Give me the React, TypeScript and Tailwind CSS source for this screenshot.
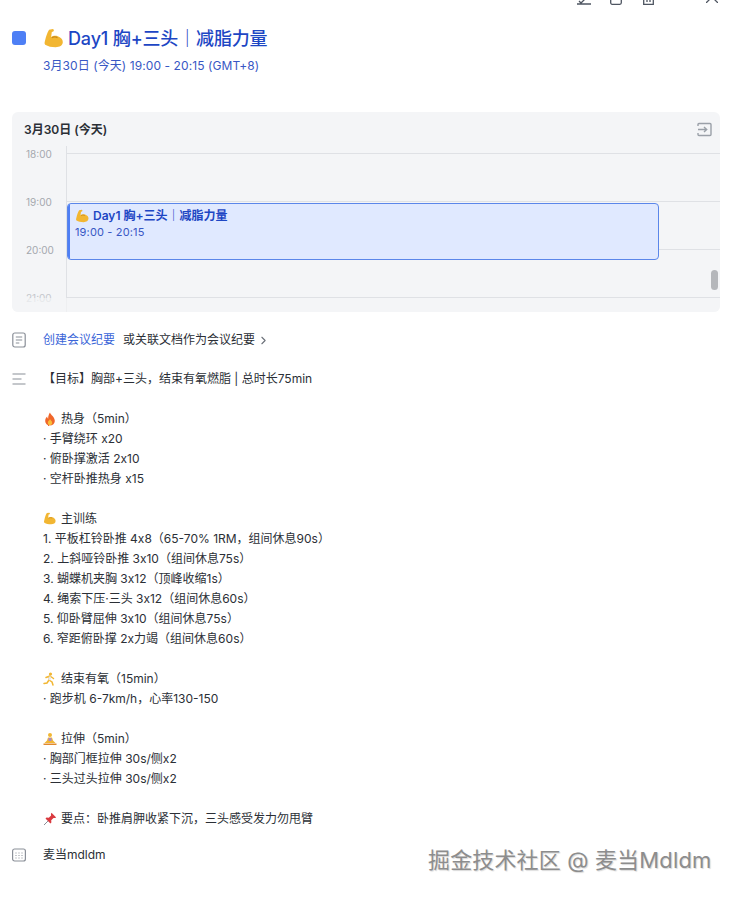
import React from 'react';
import { ChevronRight } from 'lucide-react';

const FONT = "font-['Inter','Noto_Sans_CJK_SC',sans-serif]";

function Muscle({ size }: { size: number }) {
  return (
    <svg width={size} height={size} viewBox="0 0 20 20" className="inline-block shrink-0">
      <path d="M5.500 1.500 9 1c1 .2 1.200 1.600.4 2.200l-1.400.5-.6 4.600c1.400-1.300 3.800-1.700 6-.9 2.700 1 4.600 2.500 4.600 5.400 0 3.200-3 4.700-6.500 4.700-3.700 0-7-.8-9.500-2.300C1 14.500 1.500 12.800 2 11c.7-3 1.700-6.700 3.500-9.500z" fill="#f2b632" />
      <path d="M8 8.800c1.700-.9 3.600-.9 5.200 0" fill="none" stroke="#c98a1b" strokeWidth="1" />
    </svg>
  );
}

function Fire() {
  return (
    <svg width="14" height="14" viewBox="0 0 14 14" className="inline-block shrink-0">
      <path d="M7 .5c.6 2.600 4.800 4.300 4.800 8.300 0 2.900-2.200 4.700-4.800 4.700s-4.800-1.800-4.800-4.700c0-2 1-3.300 2-4.200 0 1 .3 1.800 1 2.200C5 4.600 5.800 2 7 .5z" fill="#f0662a" />
      <path d="M7 7c.3 1.200 2.200 2 2.200 3.700 0 1.500-1 2.500-2.200 2.500s-2.200-1-2.200-2.500C4.800 9 6.400 8.400 7 7z" fill="#f8bd38" />
    </svg>
  );
}

function Runner() {
  return (
    <svg width="14" height="14" viewBox="0 0 14 14" className="inline-block shrink-0">
      <circle cx="7.500" cy="2" r="1.600" fill="#f2b632" />
      <path d="M7 4 3 5.500M7 4l3.500 2.500M7 4 6 8l3 2 1 3M6 8l-2 3-3 .5" fill="none" stroke="#f2b632" strokeWidth="1.500" strokeLinecap="round" />
      <path d="M5.800 4.500h2.400L7.400 8.200H5.600z" fill="#e5e7eb" />
    </svg>
  );
}

function Yoga() {
  return (
    <svg width="14" height="14" viewBox="0 0 14 14" className="inline-block shrink-0">
      <circle cx="7" cy="3" r="2" fill="#f2b632" />
      <path d="M5 5.500h4l1 3 2.500 2.500H1.500L4 8.500z" fill="#f2b632" />
      <path d="M.5 11.500h13V13H.5z" fill="#e08a2e" />
      <path d="M5.500 6h3v3h-3z" fill="#a78bc9" />
    </svg>
  );
}

function Pin() {
  return (
    <svg width="14" height="14" viewBox="0 0 14 14" className="inline-block shrink-0">
      <path d="M1 13 6 8" stroke="#8a8f98" strokeWidth="1" />
      <path d="M8.500.8 13.200 5.500l-1.200.6-1.500-.2-2.300 2.300.2 2.300-1 1L2.500 6.600l1-1 2.300.2 2.300-2.300-.2-1.500z" fill="#d93a3f" />
    </svg>
  );
}

function Line({ text, icon }: { text?: string; icon?: React.ReactNode }) {
  return (
    <div className="flex items-center h-5 whitespace-pre">
      {icon && <span className="mr-[4px] flex w-[14px]">{icon}</span>}
      {text}
    </div>
  );
}

export default function App() {
  return (
    <div className={`relative w-[736px] h-[897px] overflow-hidden bg-white text-[12px] text-[#2b2f36] ${FONT}`}>
      {/* window buttons cut off by the top edge */}
      <div className="absolute top-[-9px] left-[577px] flex items-start text-[#4e5561]">
        <svg width="14" height="14" viewBox="0 0 14 14" fill="none" stroke="currentColor" strokeWidth="1.300"><path d="M0 13h14M2 10l2 2 4-4" /></svg>
        <svg width="12" height="14" viewBox="0 0 12 14" fill="none" stroke="currentColor" strokeWidth="1.300" className="ml-[19px]"><rect x=".7" y="1" width="10.600" height="12.300" rx="1.500" /></svg>
        <svg width="11" height="14" viewBox="0 0 11 14" fill="none" stroke="currentColor" strokeWidth="1.300" className="ml-[21px]"><path d="M.7 4h9.600v9.300H.7zM4 8v3M7 8v3" /></svg>
        <svg width="12" height="12" viewBox="0 0 12 12" fill="none" stroke="currentColor" strokeWidth="1.300" className="ml-[52px]"><path d="M0 0l12 12M12 0 0 12" /></svg>
      </div>

      <div className="px-3 pt-[25px]">
        {/* event title */}
        <div className="flex items-start">
          <div className="w-[14px] h-[14px] mt-[6px] rounded-[3px] bg-[#4e7ff5]" />
          <div className="ml-[17px]">
            <div className="flex items-center h-[26px] mt-[1px] text-[18px] font-medium leading-[26px] tracking-[-0.15px] text-[#1d46c4]">
              <span className="mr-[3px] flex"><Muscle size={22} /></span>
              Day1 胸+三头｜减脂力量
            </div>
            <div className="mt-[4px] text-[12px] leading-[20px] tracking-[0.08px] text-[#3857c4]">3月30日 (今天) 19:00 - 20:15 (GMT+8)</div>
          </div>
        </div>

        {/* day timeline */}
        <div className="mt-[36px] relative w-[708px] h-[200px] rounded-[6px] bg-[#f4f5f7] flex flex-col overflow-hidden">
          <div className="flex shrink-0 items-center justify-between h-[34px] pl-3 pr-[8px] pt-[1px]">
            <span className="font-semibold text-[#2b2f36]">3月30日 (今天)</span>
            <svg width="15" height="15" viewBox="0 0 15 15" fill="none" stroke="#9aa0a8" strokeWidth="1.400">
              <path d="M1 4V2.500A1 1 0 0 1 2 1.500h11a1 1 0 0 1 1 1v10a1 1 0 0 1-1 1H2a1 1 0 0 1-1-1V11M1 7.500h8.500M7 5l2.700 2.500L7 10" />
            </svg>
          </div>
          <div className="relative flex-1 flex">
            <div className="w-[55px] shrink-0 border-r border-[#dfe1e5] flex flex-col text-[10px] text-[#a4a8ae]">
              <div className="h-[48px] shrink-0 pl-[14px] pt-[1px] leading-[14px]">18:00</div>
              <div className="h-[48px] shrink-0 pl-[14px] pt-[1px] leading-[14px]">19:00</div>
              <div className="h-[48px] shrink-0 pl-[14px] pt-[1px] leading-[14px]">20:00</div>
              <div className="h-[19px] shrink-0 pl-[14px] pt-[1px] leading-[14px] text-[#c4c7cc]">21:00</div>
            </div>
            <div className="flex-1 flex flex-col pt-[7px]">
              <div className="h-[48px] shrink-0 border-t border-[#dfe1e5]" />
              <div className="h-[48px] shrink-0 border-t border-[#dfe1e5]" />
              <div className="h-[48px] shrink-0 border-t border-[#dfe1e5]" />
              <div className="h-[14px] shrink-0 border-t border-[#dfe1e5]" />
            </div>
            {/* event block */}
            <div className="absolute left-[55px] top-[57px] w-[592px] h-[57px] rounded-[4px] border border-[#5b86ea] bg-[#e0e9ff] overflow-hidden">
              <div className="absolute left-0 top-0 bottom-0 w-[2px] bg-[#4e7ff5]" />
              <div className="pl-[7px] pt-[2px]">
                <div className="flex items-center h-5 font-semibold text-[#1d46c4]">
                  <span className="mr-[3px] flex"><Muscle size={15} /></span>
                  Day1 胸+三头｜减脂力量
                </div>
                <div className="mt-[-3px] text-[11px] leading-[18px] tracking-[0.15px] text-[#3857c4]">19:00 - 20:15</div>
              </div>
            </div>
            {/* scrollbar */}
            <div className="absolute right-[2px] top-[124px] w-[7px] h-[20px] rounded-full bg-[#b5b7bb]" />
            {/* list fades out at the bottom of the card */}
            <div className="absolute left-0 right-0 bottom-0 h-[14px] bg-[#f4f5f7]/70" />
          </div>
        </div>

        {/* meeting notes */}
        <div className="flex items-center h-5 mt-[18px]">
          <svg width="14" height="16" viewBox="0 0 14 16" fill="none" stroke="#8a8f98" strokeWidth="1.200" className="shrink-0">
            <rect x=".8" y="1" width="12.400" height="14" rx="2" />
            <path d="M3.800 5h6.400M3.800 8h6.400M3.800 11h3.500" />
          </svg>
          <span className="ml-[17px] text-[#3b66d8]">创建会议纪要</span>
          <span className="ml-[8px]">或关联文档作为会议纪要</span>
          <ChevronRight size={13} className="ml-[2px] text-[#6b7079]" />
        </div>

        {/* description */}
        <div className="flex mt-[19px]">
          <svg width="14" height="20" viewBox="0 0 14 20" fill="none" stroke="#8a8f98" strokeWidth="1.200" className="shrink-0">
            <path d="M.5 5h13M.5 10h9M.5 15h13" />
          </svg>
          <div className="ml-[17px] flex flex-col">
            <Line text="【目标】胸部+三头，结束有氧燃脂 | 总时长75min" />
            <Line />
            <Line icon={<Fire />} text="热身（5min）" />
            <Line text="· 手臂绕环 x20" />
            <Line text="· 俯卧撑激活 2x10" />
            <Line text="· 空杆卧推热身 x15" />
            <Line />
            <Line icon={<Muscle size={14} />} text="主训练" />
            <Line text="1. 平板杠铃卧推 4x8（65-70% 1RM，组间休息90s）" />
            <Line text="2. 上斜哑铃卧推 3x10（组间休息75s）" />
            <Line text="3. 蝴蝶机夹胸 3x12（顶峰收缩1s）" />
            <Line text="4. 绳索下压·三头 3x12（组间休息60s）" />
            <Line text="5. 仰卧臂屈伸 3x10（组间休息75s）" />
            <Line text="6. 窄距俯卧撑 2x力竭（组间休息60s）" />
            <Line />
            <Line icon={<Runner />} text="结束有氧（15min）" />
            <Line text="· 跑步机 6-7km/h，心率130-150" />
            <Line />
            <Line icon={<Yoga />} text="拉伸（5min）" />
            <Line text="· 胸部门框拉伸 30s/侧x2" />
            <Line text="· 三头过头拉伸 30s/侧x2" />
            <Line />
            <Line icon={<Pin />} text="要点：卧推肩胛收紧下沉，三头感受发力勿甩臂" />
          </div>
        </div>

        {/* organizer */}
        <div className="flex items-center h-5 mt-[16px]">
          <svg width="14" height="14" viewBox="0 0 14 14" fill="none" stroke="#8a8f98" strokeWidth="1.200" className="shrink-0">
            <rect x=".6" y="1" width="12.800" height="12" rx="2" />
            <path d="M3.500 5h1M6.500 5h1M9.500 5h1M3.500 7.500h1M6.500 7.500h1M9.500 7.500h1M3.500 10h1M6.500 10h1M9.500 10h1" />
          </svg>
          <span className="ml-[17px]">麦当mdldm</span>
        </div>
      </div>

      {/* watermark from the image host */}
      <div className="absolute left-[428px] top-[846px] text-[22px] leading-[28px] tracking-[0.15px] whitespace-nowrap text-[#8d8d8d] [text-shadow:1px_1px_1px_#d8d8d8]">
        掘金技术社区 @ 麦当Mdldm
      </div>
    </div>
  );
}
